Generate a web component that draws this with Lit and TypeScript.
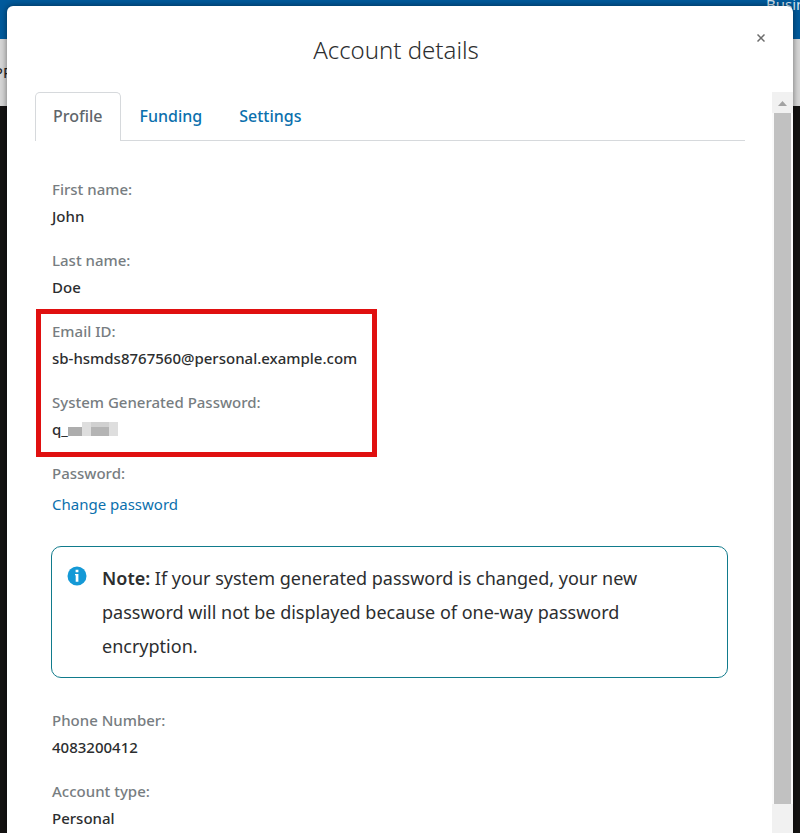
import { LitElement, html, css } from "lit";
import { customElement, property, state } from "lit/decorators.js";

@customElement("profile-field")
class ProfileField extends LitElement {
  @property() label = "";

  static styles = css`
    :host {
      display: block;
      font-size: 15px;
      font-weight: 500;
      line-height: 27px;
    }
    .label {
      color: #777d81;
      font-weight: 500;
    }
    .value {
      color: #2c2e2f;
    }
  `;

  render() {
    return html`
      <div class="label">${this.label}</div>
      <div class="value"><slot></slot></div>
    `;
  }
}

@customElement("app-root")
class AppRoot extends LitElement {
  @state() tab = "Profile";

  static styles = css`
    :host {
      display: grid;
      grid-template: minmax(0, 1fr) / minmax(0, 1fr);
      height: 100vh;
      overflow: hidden;
      font-family: "Noto Sans", "Open Sans", sans-serif;
      color: #2c2e2f;
    }
    *,
    *::before {
      box-sizing: border-box;
    }
    .page,
    .modal {
      grid-area: 1 / 1;
    }
    .page {
      display: flex;
      flex-direction: column;
      background: #141312;
    }
    .topbar {
      display: flex;
      justify-content: flex-end;
      height: 39px;
      background: #005a9c;
      color: #d5e3ee;
      font-size: 15px;
      line-height: 8px;
      white-space: nowrap;
    }
    .topbar span {
      width: 34px;
    }
    .subbar {
      height: 67px;
      background: #d6d6d6;
      color: #222;
      font-size: 15px;
      line-height: 66px;
    }
    .subbar span {
      display: block;
      width: 12px;
      overflow: hidden;
      direction: rtl;
    }
    .modal {
      display: flex;
      flex-direction: column;
      margin: 6px 7px 0;
      border-radius: 6px 6px 0 0;
      background: #fff;
      box-shadow: 0 0 6px rgba(0, 0, 0, 0.5);
      z-index: 1;
      min-height: 0;
    }
    .head {
      position: relative;
      flex: none;
      height: 86px;
      padding-right: 8px;
      text-align: center;
    }
    h1 {
      margin: 0;
      font-size: 24px;
      font-weight: 300;
      line-height: 88px;
    }
    .close {
      position: absolute;
      top: 24px;
      right: 24px;
      width: 16px;
      height: 16px;
      padding: 4px;
      border: 0;
      background: none;
      cursor: pointer;
    }
    .close svg {
      display: block;
      width: 8px;
      height: 8px;
    }
    .body {
      display: flex;
      flex: 1;
      min-height: 0;
    }
    .content {
      flex: 1;
      min-width: 0;
      padding: 0 27px 0 28px;
      overflow: hidden;
    }
    .tabs {
      display: flex;
      gap: 1px;
      height: 49px;
      border-bottom: 1px solid #d6d9dc;
    }
    .tab {
      display: block;
      height: 49px;
      padding: 0 17px 2px;
      border: 1px solid transparent;
      border-bottom: 0;
      border-radius: 5px 5px 0 0;
      background: none;
      color: #0b70ad;
      font: 500 16px / 46px "Noto Sans", "Open Sans", sans-serif;
      cursor: pointer;
    }
    .tab.active {
      border-color: #d6d9dc;
      background: #fff;
      color: #5f666b;
    }
    .panel {
      display: flex;
      flex-direction: column;
      gap: 17px;
      padding: 35px 17px 0;
    }
    .marked {
      position: relative;
      display: flex;
      flex-direction: column;
      gap: 17px;
    }
    .marked::before {
      content: "";
      position: absolute;
      top: -9px;
      bottom: -14px;
      left: -16px;
      width: 341px;
      border: 5px solid #e01010;
      pointer-events: none;
    }
    .secret {
      display: flex;
      align-items: center;
    }
    .secret svg {
      width: 50px;
      height: 16px;
    }
    .link {
      display: block;
      padding-top: 4px;
      color: #0b70ad;
      font-weight: 400;
      text-decoration: none;
    }
    .note {
      display: flex;
      gap: 15px;
      margin: 11px 0 12px -1px;
      padding: 14px 15px;
      border: 1px solid #117b8c;
      border-radius: 10px;
      font-size: 18px;
      line-height: 34px;
    }
    .note svg {
      flex: none;
      width: 20px;
      height: 20px;
      margin-top: 5px;
    }
    .note p {
      margin: 0;
    }
    .note b {
      font-weight: 600;
    }
    .scroll {
      display: flex;
      flex-direction: column;
      flex: none;
      width: 21px;
      background: #f1f1f1;
    }
    .arrow {
      display: block;
      width: 21px;
      height: 21px;
    }
    .thumb {
      flex: 1;
      margin: 0 0 29px;
      border: solid #fafafa;
      border-width: 0 2px;
      background: #c1c1c1;
    }
  `;

  render() {
    return html`
      <div class="page">
        <div class="topbar"><span>Business</span></div>
        <div class="subbar"><span>PP</span></div>
      </div>
      <section class="modal" role="dialog" aria-labelledby="title">
        <header class="head">
          <h1 id="title">Account details</h1>
          <button class="close" aria-label="Close">
            <svg viewBox="0 0 8 8" stroke="#6c6c6c" stroke-width="1.5">
              <path d="M.5.5l7 7M7.500.500L.5 7.500" />
            </svg>
          </button>
        </header>
        <div class="body">
          <div class="content">
            <nav class="tabs" role="tablist">
              ${["Profile", "Funding", "Settings"].map(
                (name) => html`<button
                  role="tab"
                  class="tab ${name === this.tab ? "active" : ""}"
                  aria-selected=${name === this.tab}
                  @click=${() => (this.tab = name)}
                >${name}</button>`
              )}
            </nav>
            <div class="panel">
              <profile-field label="First name:">John</profile-field>
              <profile-field label="Last name:">Doe</profile-field>
              <div class="marked">
                <profile-field label="Email ID:">sb-hsmds8767560@personal.example.com</profile-field>
                <profile-field label="System Generated Password:">
                  <span class="secret">q_<svg viewBox="0 0 50 16" aria-hidden="true" shape-rendering="crispEdges">
                    <path fill="#adadad" d="M0 5h14v9H0z" />
                    <path fill="#dedede" d="M14 0h9v14h-9zM41 0h9v14h-9z" />
                    <path fill="#d0d0d0" d="M23 0h18v5H23z" />
                    <path fill="#b4b4b4" d="M23 5h18v9H23z" />
                  </svg></span>
                </profile-field>
              </div>
              <profile-field label="Password:"><a class="link" href="#">Change password</a></profile-field>
              <div class="note">
                <svg viewBox="0 0 20 20" aria-hidden="true">
                  <circle cx="10" cy="10" r="9.5" fill="#1499d6" />
                  <path fill="#fff" d="M8.600 3.700h2.800v2.600H8.600zM8 8h3.400v7.800H8.700V9.200H8z" />
                </svg>
                <p><b>Note:</b> If your system generated password is changed, your new password will not be displayed because of one-way password encryption.</p>
              </div>
              <profile-field label="Phone Number:">4083200412</profile-field>
              <profile-field label="Account type:">Personal</profile-field>
            </div>
          </div>
          <div class="scroll" aria-hidden="true">
            <svg class="arrow" viewBox="0 0 21 21"><path d="M6 14l4.500-5 4.500 5z" fill="#a3a3a3" /></svg>
            <div class="thumb"></div>
          </div>
        </div>
      </section>
    `;
  }
}
